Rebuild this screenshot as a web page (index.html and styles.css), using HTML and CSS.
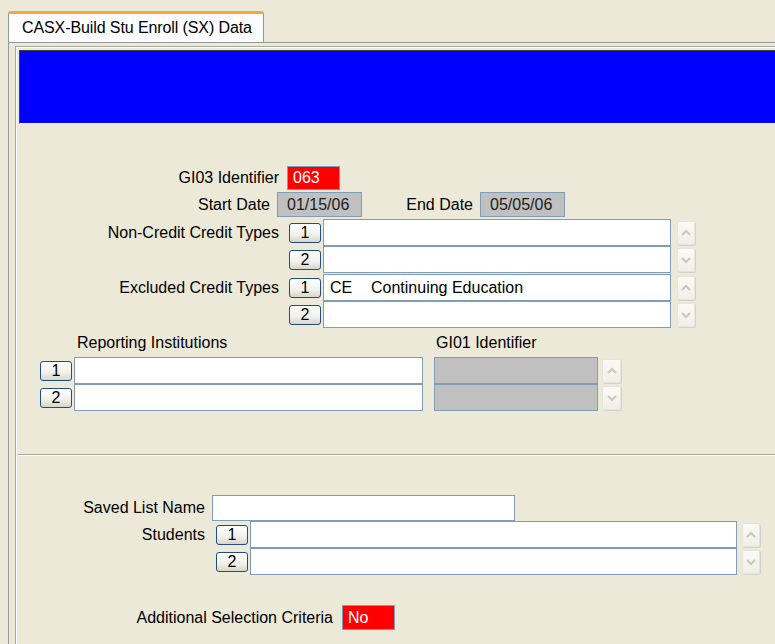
FILE: index.html
```html
<!DOCTYPE html>
<html lang="en">
<head>
<meta charset="utf-8">
<title>CASX-Build Stu Enroll (SX) Data</title>
<link rel="stylesheet" href="styles.css">
</head>
<body>
<div class="window">
  <div class="tabstrip">
    <div class="tab">CASX-Build Stu Enroll (SX) Data</div>
  </div>
  <div class="panel">
    <div class="frame">
      <div class="banner"></div>

      <section class="upper">
        <div class="row row-gi03">
          <label class="lbl w-main">GI03 Identifier</label>
          <div class="box box-red w-id">063</div>
        </div>

        <div class="row row-dates">
          <label class="lbl w-start">Start Date</label>
          <div class="box box-gray w-date">01/15/06</div>
          <label class="lbl w-end">End Date</label>
          <div class="box box-gray w-date">05/05/06</div>
        </div>

        <div class="pairs">
          <div class="pair">
            <div class="row list-row">
              <label class="lbl w-main">Non-Credit Credit Types</label>
              <button class="num">1</button>
              <div class="field w-credit"></div>
              <span class="spin up"><svg viewBox="0 0 12 8"><polyline points="2,6 6,2 10,6"/></svg></span>
            </div>
            <div class="row list-row">
              <label class="lbl w-main"></label>
              <button class="num">2</button>
              <div class="field w-credit"></div>
              <span class="spin down"><svg viewBox="0 0 12 8"><polyline points="2,2 6,6 10,2"/></svg></span>
            </div>
          </div>
          <div class="pair">
            <div class="row list-row">
              <label class="lbl w-main">Excluded Credit Types</label>
              <button class="num">1</button>
              <div class="field w-credit"><span class="code">CE</span><span>Continuing Education</span></div>
              <span class="spin up"><svg viewBox="0 0 12 8"><polyline points="2,6 6,2 10,6"/></svg></span>
            </div>
            <div class="row list-row">
              <label class="lbl w-main"></label>
              <button class="num">2</button>
              <div class="field w-credit"></div>
              <span class="spin down"><svg viewBox="0 0 12 8"><polyline points="2,2 6,6 10,2"/></svg></span>
            </div>
          </div>
        </div>

        <div class="inst">
          <div class="inst-head">
            <span class="inst-title">Reporting Institutions</span>
            <span>GI01 Identifier</span>
          </div>
          <div class="row inst-row">
            <button class="num">1</button>
            <div class="field w-inst"></div>
            <div class="field field-gray w-gi01"></div>
            <span class="spin up wide"><svg viewBox="0 0 12 8"><polyline points="2,6 6,2 10,6"/></svg></span>
          </div>
          <div class="row inst-row">
            <button class="num">2</button>
            <div class="field w-inst"></div>
            <div class="field field-gray w-gi01"></div>
            <span class="spin down wide"><svg viewBox="0 0 12 8"><polyline points="2,2 6,6 10,2"/></svg></span>
          </div>
        </div>
      </section>

      <div class="sep"></div>

      <section class="lower">
        <div class="row saved-row">
          <label class="lbl w-lower">Saved List Name</label>
          <div class="field w-saved"></div>
        </div>
        <div class="students">
          <div class="row list-row">
            <label class="lbl w-lower">Students</label>
            <button class="num">1</button>
            <div class="field w-students"></div>
            <span class="spin up"><svg viewBox="0 0 12 8"><polyline points="2,6 6,2 10,6"/></svg></span>
          </div>
          <div class="row list-row">
            <label class="lbl w-lower"></label>
            <button class="num">2</button>
            <div class="field w-students"></div>
            <span class="spin down"><svg viewBox="0 0 12 8"><polyline points="2,2 6,6 10,2"/></svg></span>
          </div>
        </div>
        <div class="row criteria-row">
          <label class="lbl w-criteria">Additional Selection Criteria</label>
          <div class="box box-red w-id">No</div>
        </div>
      </section>
    </div>
  </div>
</div>
</body>
</html>
```

FILE: styles.css
```css
html, body {
  margin: 0;
  padding: 0;
}

body {
  width: 775px;
  height: 644px;
  overflow: hidden;
  background: #ece9d8;
  font-family: "Liberation Sans", Arial, sans-serif;
  font-size: 16px;
  color: #000;
}

/* tab strip */
.tabstrip {
  display: flex;
  padding: 11px 0 0 8px;
  height: 31px;
}

.tab {
  width: 241px;
  height: 28px;
  margin-bottom: -1px;
  position: relative;
  z-index: 1;
  background: #fcfcfe;
  border: 1px solid #919b9c;
  border-bottom: none;
  border-top: 3px solid #f4a93a;
  border-radius: 3px 3px 0 0;
  padding-left: 13px;
  line-height: 27px;
  letter-spacing: -0.1px;
  white-space: nowrap;
}

/* tab page */
.panel {
  margin-left: 8px;
  border-top: 1px solid #919b9c;
  border-left: 1px solid #919b9c;
  padding: 3px 0 0 6px;
  height: 600px;
}

.frame {
  border-top: 1px solid #aca899;
  border-left: 1px solid #aca899;
  box-shadow: inset 1px 1px 0 #ffffff;
  padding: 3px 0 0 3px;
  height: 600px;
}

.banner {
  height: 72px;
  background: #0000ff;
  border-top: 1px solid #404040;
  border-left: 1px solid #404040;
  border-bottom: 1px solid #f4f2ea;
}

/* generic rows */
.row {
  display: flex;
  align-items: center;
}

.lbl {
  flex: none;
  text-align: right;
  white-space: nowrap;
}

.box {
  flex: none;
  box-sizing: border-box;
  height: 25px;
  line-height: 23px;
  border: 1px solid #7f9db9;
}

.box-red {
  background: #ff0000;
  color: #ffffff;
  padding-left: 5px;
}

.box-gray {
  background: #c0c0c0;
  color: #202020;
  padding-left: 9px;
}

.field {
  flex: none;
  box-sizing: border-box;
  height: 27px;
  line-height: 25px;
  background: #ffffff;
  border: 1px solid #7f9db9;
  padding-left: 6px;
  white-space: nowrap;
}

.field-gray {
  background: #c0c0c0;
}

.code {
  display: inline-block;
  width: 41px;
}

/* numbered list buttons */
.num {
  flex: none;
  box-sizing: border-box;
  width: 32px;
  height: 20px;
  padding: 0;
  border: 1px solid #1f4e82;
  border-radius: 3px;
  background: linear-gradient(#ffffff, #f1f0ea 60%, #d8d4c8);
  font-family: inherit;
  font-size: 16px;
  line-height: 17px;
  color: #000;
}

/* disabled spin arrows */
.spin {
  flex: none;
  box-sizing: border-box;
  width: 18px;
  height: 24px;
  display: flex;
  align-items: center;
  justify-content: center;
  border: 1px solid #e6e4dc;
  border-radius: 2px;
  background: linear-gradient(#fbfaf7, #efeee8);
  box-shadow: 1px 1px 0 #d6d3c8;
}

.spin.wide {
  width: 19px;
}

.spin svg {
  width: 12px;
  height: 8px;
}

.spin polyline {
  fill: none;
  stroke: #c9c7bb;
  stroke-width: 2;
}

/* upper section sizing */
.upper {
  padding-top: 42px;
}

.w-main { width: 260px; }
.w-start { width: 251px; }
.w-end { width: 111px; }
.w-id { width: 53px; }
.w-date { width: 85px; }
.w-credit { width: 348px; }

.row-gi03 .box { margin-left: 8px; height: 24px; line-height: 22px; }

.row-dates {
  margin-top: 2px;
}
.row-dates .box { margin-left: 7px; }

.pairs {
  margin-top: 2px;
  display: flex;
  flex-direction: column;
  gap: 1px;
}

.pair {
  display: flex;
  flex-direction: column;
}

.list-row .num { margin-left: 10px; margin-right: 2px; }
.list-row .spin { margin-left: 6px; }

/* reporting institutions */
.inst {
  margin-top: 7px;
}

.inst-head {
  display: flex;
  height: 22px;
  line-height: 16px;
}

.inst-title {
  margin-left: 58px;
  width: 359px;
}

.inst-row .num { margin-left: 21px; margin-right: 2px; }
.w-inst { width: 349px; }
.w-gi01 { width: 164px; margin-left: 11px; }
.inst-row .spin { margin-left: 4px; }

/* divider between sections */
.sep {
  margin-top: 43px;
  margin-left: -1px;
  border-top: 1px solid #aca899;
  border-bottom: 1px solid #ffffff;
}

/* lower section */
.lower {
  padding-top: 39px;
}

.w-lower { width: 186px; }
.w-saved { width: 303px; margin-left: 7px; height: 26px; }
.w-students { width: 487px; }
.w-criteria { width: 314px; }

.students .list-row .num { margin-left: 11px; margin-right: 2px; }
.students .list-row .spin { margin-left: 5px; }

.criteria-row {
  margin-top: 30px;
}
.criteria-row .box { margin-left: 9px; }
```
